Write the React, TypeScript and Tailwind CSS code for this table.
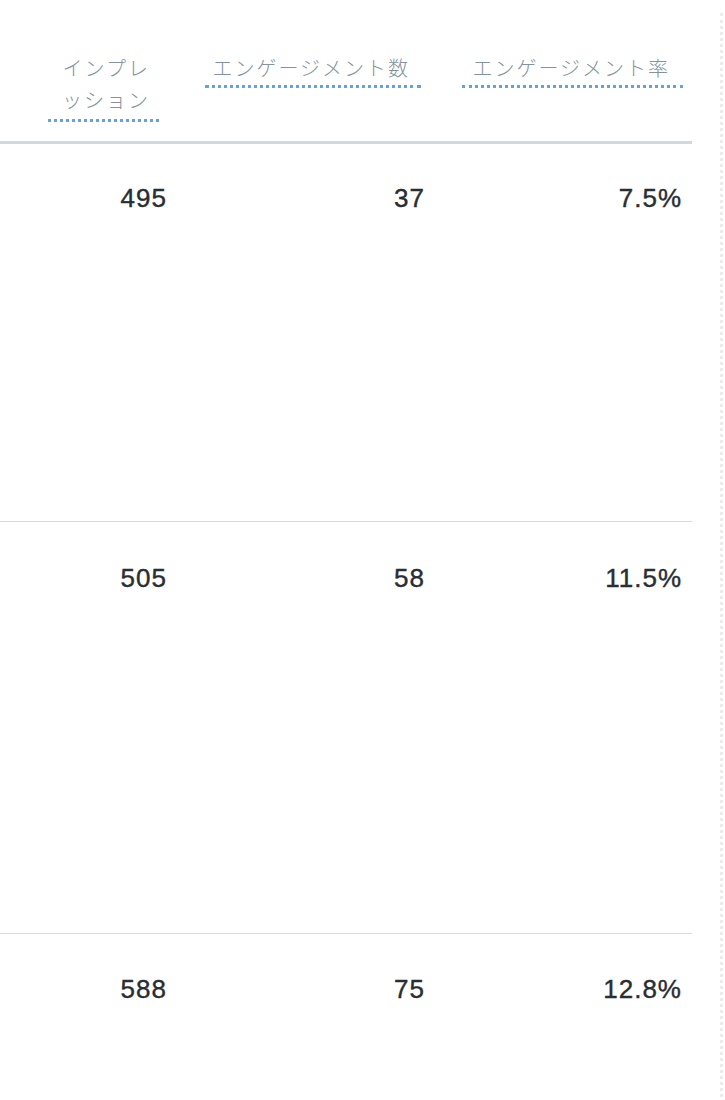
import React from "react";

const rows = [
  { impressions: "495", engagements: "37", rate: "7.5%", height: "h-[378px]", pad: "pt-[39px]" },
  { impressions: "505", engagements: "58", rate: "11.5%", height: "h-[412px]", pad: "pt-[41px]" },
  { impressions: "588", engagements: "75", rate: "12.8%", height: "h-[200px]", pad: "pt-[40px]" },
];

const jp = { fontFamily: '"Noto Sans CJK JP", "Noto Sans", sans-serif' };
const num = { fontFamily: '"Liberation Sans", Arial, sans-serif' };

export default function App() {
  return (
    <div className="flex min-h-[1100px] bg-white">
      <div className="w-[692px] shrink-0">
        {/* header */}
        <div
          className="grid grid-cols-[179px_257px_256px] h-[144px] border-b-[3px] border-[#d1d8e0] text-[20px] leading-[32px] font-light text-[#8592a0] tracking-[2px]"
          style={jp}
        >
          <div className="flex items-start justify-end pr-[20px] pt-[52px]">
            <span className="inline-block w-[111px] pr-[9px] text-right border-b-[3px] border-dotted border-[#63a1e6] pb-[3px]">
              インプレ<br />ッション
            </span>
          </div>
          <div className="flex items-start justify-end pr-[15px] pt-[52px]">
            <span className="inline-block border-b-[3px] border-dotted border-[#63a1e6] pl-[7px] pr-[11px] pb-[1px]">
              エンゲージメント数
            </span>
          </div>
          <div className="flex items-start justify-end pr-[9px] pt-[52px]">
            <span className="inline-block border-b-[3px] border-dotted border-[#63a1e6] pl-[10px] pr-[13px] pb-[1px]">
              エンゲージメント率
            </span>
          </div>
        </div>

        {/* rows */}
        {rows.map((r, i) => (
          <div
            key={i}
            className={`grid grid-cols-[179px_257px_256px] ${r.height} ${
              i < rows.length - 1 ? "border-b border-[#d6dadf]" : ""
            } text-[26px] leading-[30px] tracking-[1px] text-[#2a2d31] text-right [-webkit-text-stroke:0.4px_#2a2d31]`}
            style={num}
          >
            <div className={`pr-[12px] ${r.pad}`}>{r.impressions}</div>
            <div className={`pr-[11px] ${r.pad}`}>{r.engagements}</div>
            <div className={`pr-[10px] ${r.pad}`}>{r.rate}</div>
          </div>
        ))}
      </div>
      <div className="ml-[28px] mt-[13px] w-0 border-l-[3px] border-dotted border-[#ececec]" />
    </div>
  );
}
